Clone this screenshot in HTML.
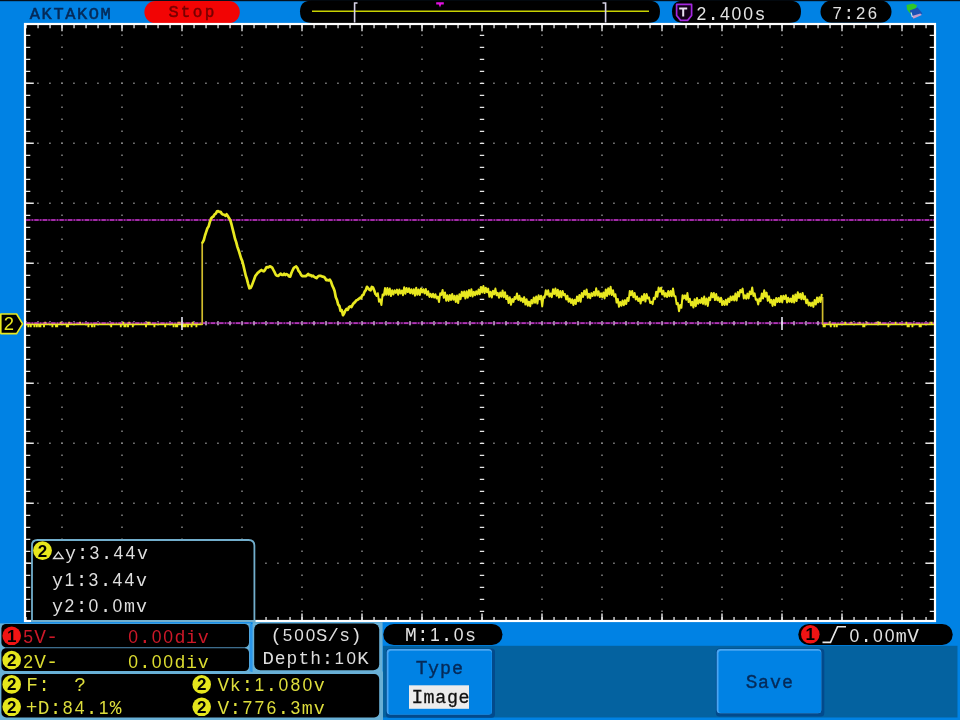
<!DOCTYPE html>
<html lang="en"><head><meta charset="utf-8"><title>AKTAKOM oscilloscope</title>
<style>html,body{margin:0;padding:0;background:#0082e4;overflow:hidden}svg{display:block;filter:blur(0.4px)}text{font-family:"Liberation Mono","DejaVu Sans Mono",monospace;white-space:pre}.s{font-family:"Liberation Sans","DejaVu Sans",sans-serif}</style></head><body>
<svg width="960" height="720" viewBox="0 0 960 720">
<rect x="0" y="0" width="960" height="720" fill="#0082e4"/>
<rect x="0" y="0" width="960" height="1.2" fill="#05101c"/>
<text text-anchor="middle" x="34.9 46.7 58.5 70.3 82.1 93.9 105.7" y="18.7" font-size="17.0" fill="#052a58" stroke="#052a58" stroke-width="0.55" xml:space="preserve">AKTAKOM</text>
<rect x="144.4" y="1" width="95.4" height="22.2" rx="11" fill="#f20404"/>
<text text-anchor="middle" x="173.5 185.5 197.5 209.5" y="17.3" font-size="17.0" fill="#760000" stroke="#760000" stroke-width="0.45" xml:space="preserve">S<tspan font-size="16.0">top</tspan></text>
<path d="M300,11.5 Q300,0.5 312,0.5 L648,0.5 Q660,0.5 660,11.5 Q660,23 648,23 L312,23 Q300,23 300,11.5Z" fill="#000"/>
<line x1="312" y1="11.3" x2="649" y2="11.3" stroke="#c8d200" stroke-width="1.5"/>
<path d="M357.5,3 H354.6 V22.6" fill="none" stroke="#d8d4e8" stroke-width="1.6"/>
<path d="M602.5,3 H605.6 V22.6" fill="none" stroke="#d8d4e8" stroke-width="1.6"/>
<path d="M436.2,2.2 H443.8 V4.4 H441.2 L440,7.6 L438.8,4.4 H436.2Z" fill="#e010e0"/>
<path d="M672,11.5 Q672,0.5 684,0.5 L789,0.5 Q801,0.5 801,11.5 Q801,23 789,23 L684,23 Q672,23 672,11.5Z" fill="#000"/>
<path d="M676.6,4.4 H691.6 V15.5 L687.6,20.4 H680.6 L676.6,15.5Z" fill="#120018" stroke="#a428e0" stroke-width="1.7" stroke-linejoin="round"/>
<path d="M679.2,8.4 H687.2 M683.2,8.4 V16.6" fill="none" stroke="#e8e0f0" stroke-width="2"/>
<text text-anchor="middle" x="701.4 713.0 724.8 736.5 748.1 759.9" y="19.6" font-size="19.5" fill="#e4e4e4" xml:space="preserve"><tspan class="s" font-size="17.6">2</tspan>.<tspan class="s" font-size="17.6">400</tspan><tspan font-size="18.3">s</tspan></text>
<rect x="820.5" y="0.5" width="71" height="22.3" rx="11.1" fill="#000"/>
<text text-anchor="middle" x="837.2 848.9 860.7 872.5" y="18.6" font-size="18.6" fill="#e0e0e0" xml:space="preserve"><tspan class="s" font-size="16.7">7</tspan>:<tspan class="s" font-size="16.7">26</tspan></text>
<path d="M906.5,5 L913,3.6 L917,5.2 L915.6,9 L912,10.5 L910.5,14 L907,9.5Z" fill="#30c828"/>
<path d="M909.6,10.6 L917.6,7.6 L922.4,13.6 L913.2,19Z" fill="#1a50b4"/>
<path d="M912,16 L920.4,13.6 L921.8,15 L913.4,18.8Z" fill="#c89cc8"/>
<path d="M911,12.5 L912.4,17.2" stroke="#c8e8f0" stroke-width="1.1"/>
<rect x="25" y="24" width="910" height="597" fill="#000"/>
<line x1="25.2" y1="83.3" x2="934" y2="83.3" stroke="#868686" stroke-width="1.5" stroke-dasharray="1.5 10.5"/>
<line x1="25.2" y1="143.3" x2="934" y2="143.3" stroke="#868686" stroke-width="1.5" stroke-dasharray="1.5 10.5"/>
<line x1="25.2" y1="203.3" x2="934" y2="203.3" stroke="#868686" stroke-width="1.5" stroke-dasharray="1.5 10.5"/>
<line x1="25.2" y1="263.3" x2="934" y2="263.3" stroke="#868686" stroke-width="1.5" stroke-dasharray="1.5 10.5"/>
<line x1="25.2" y1="383.3" x2="934" y2="383.3" stroke="#868686" stroke-width="1.5" stroke-dasharray="1.5 10.5"/>
<line x1="25.2" y1="443.3" x2="934" y2="443.3" stroke="#868686" stroke-width="1.5" stroke-dasharray="1.5 10.5"/>
<line x1="25.2" y1="503.3" x2="934" y2="503.3" stroke="#868686" stroke-width="1.5" stroke-dasharray="1.5 10.5"/>
<line x1="25.2" y1="563.3" x2="934" y2="563.3" stroke="#868686" stroke-width="1.5" stroke-dasharray="1.5 10.5"/>
<line x1="62.0" y1="34.6" x2="62.0" y2="620" stroke="#868686" stroke-width="1.5" stroke-dasharray="1.5 10.5"/>
<line x1="122.0" y1="34.6" x2="122.0" y2="620" stroke="#868686" stroke-width="1.5" stroke-dasharray="1.5 10.5"/>
<line x1="182.0" y1="34.6" x2="182.0" y2="620" stroke="#868686" stroke-width="1.5" stroke-dasharray="1.5 10.5"/>
<line x1="242.0" y1="34.6" x2="242.0" y2="620" stroke="#868686" stroke-width="1.5" stroke-dasharray="1.5 10.5"/>
<line x1="302.0" y1="34.6" x2="302.0" y2="620" stroke="#868686" stroke-width="1.5" stroke-dasharray="1.5 10.5"/>
<line x1="362.0" y1="34.6" x2="362.0" y2="620" stroke="#868686" stroke-width="1.5" stroke-dasharray="1.5 10.5"/>
<line x1="422.0" y1="34.6" x2="422.0" y2="620" stroke="#868686" stroke-width="1.5" stroke-dasharray="1.5 10.5"/>
<line x1="542.0" y1="34.6" x2="542.0" y2="620" stroke="#868686" stroke-width="1.5" stroke-dasharray="1.5 10.5"/>
<line x1="602.0" y1="34.6" x2="602.0" y2="620" stroke="#868686" stroke-width="1.5" stroke-dasharray="1.5 10.5"/>
<line x1="662.0" y1="34.6" x2="662.0" y2="620" stroke="#868686" stroke-width="1.5" stroke-dasharray="1.5 10.5"/>
<line x1="722.0" y1="34.6" x2="722.0" y2="620" stroke="#868686" stroke-width="1.5" stroke-dasharray="1.5 10.5"/>
<line x1="782.0" y1="34.6" x2="782.0" y2="620" stroke="#868686" stroke-width="1.5" stroke-dasharray="1.5 10.5"/>
<line x1="842.0" y1="34.6" x2="842.0" y2="620" stroke="#868686" stroke-width="1.5" stroke-dasharray="1.5 10.5"/>
<line x1="902.0" y1="34.6" x2="902.0" y2="620" stroke="#868686" stroke-width="1.5" stroke-dasharray="1.5 10.5"/>
<line x1="482" y1="34.8" x2="482" y2="620" stroke="#e6e6e6" stroke-width="4.4" stroke-dasharray="1.2 10.8"/>
<line x1="25.4" y1="323.3" x2="934" y2="323.3" stroke="#b0b0b0" stroke-width="4.4" stroke-dasharray="1.2 10.8"/>
<line x1="25.4" y1="26.5" x2="934" y2="26.5" stroke="#e6e6e6" stroke-width="3.4" stroke-dasharray="1.3 10.7"/>
<line x1="61.3" y1="28" x2="934" y2="28" stroke="#e6e6e6" stroke-width="6.4" stroke-dasharray="1.4 58.6"/>
<line x1="25.4" y1="618.6" x2="934" y2="618.6" stroke="#e6e6e6" stroke-width="3.4" stroke-dasharray="1.3 10.7"/>
<line x1="61.3" y1="617" x2="934" y2="617" stroke="#e6e6e6" stroke-width="6.8" stroke-dasharray="1.4 58.6"/>
<line x1="28" y1="34.7" x2="28" y2="620" stroke="#e6e6e6" stroke-width="4.6" stroke-dasharray="1.3 10.7"/>
<line x1="29.8" y1="82.6" x2="29.8" y2="620" stroke="#e6e6e6" stroke-width="8" stroke-dasharray="1.4 58.6"/>
<line x1="932" y1="34.7" x2="932" y2="620" stroke="#e6e6e6" stroke-width="4.6" stroke-dasharray="1.3 10.7"/>
<line x1="930" y1="82.6" x2="930" y2="620" stroke="#e6e6e6" stroke-width="8.6" stroke-dasharray="1.4 58.6"/>
<rect x="25" y="24" width="910" height="597" fill="none" stroke="#fff" stroke-width="2.2"/>
<line x1="26" y1="220" x2="934" y2="220" stroke="#4a0c50" stroke-width="2.2"/>
<line x1="26" y1="220" x2="934" y2="220" stroke="#a02ca4" stroke-width="1.9" stroke-dasharray="4.2 1.5 1.2 1.5"/>
<line x1="26" y1="323.2" x2="934" y2="323.2" stroke="#4a0c50" stroke-width="2.2"/>
<path d="M26.0,324.4 L28.4,324.4 L28.4,327.2 L28.4,324.4 L30.8,324.4 L30.8,327.2 L30.8,324.4 L34.4,324.4 L34.4,327.2 L34.4,324.4 L36.8,324.4 L36.8,327.2 L36.8,324.4 L39.2,324.4 L39.2,327.2 L39.2,324.4 L40.4,324.4 L40.4,327.2 L40.4,324.4 L44.0,324.4 L44.0,327.2 L44.0,324.4 L45.2,324.4 L45.2,321.8 L45.2,324.4 L52.4,324.4 L52.4,327.2 L52.4,324.4 L56.0,324.4 L56.0,327.2 L56.0,324.4 L57.2,324.4 L57.2,327.2 L57.2,324.4 L60.8,324.4 L60.8,321.8 L60.8,324.4 L66.8,324.4 L66.8,327.2 L66.8,324.4 L68.0,324.4 L68.0,327.2 L68.0,324.4 L69.2,324.4 L69.2,321.8 L69.2,324.4 L80.0,324.4 L80.0,321.8 L80.0,324.4 L88.4,324.4 L88.4,327.2 L88.4,324.4 L92.0,324.4 L92.0,327.2 L92.0,324.4 L94.4,324.4 L94.4,327.2 L94.4,324.4 L111.2,324.4 L111.2,327.2 L111.2,324.4 L120.8,324.4 L120.8,327.2 L120.8,324.4 L123.2,324.4 L123.2,321.8 L123.2,324.4 L124.4,324.4 L124.4,327.2 L124.4,324.4 L125.6,324.4 L125.6,327.2 L125.6,324.4 L128.0,324.4 L128.0,327.2 L128.0,324.4 L129.2,324.4 L129.2,321.8 L129.2,324.4 L132.8,324.4 L132.8,327.2 L132.8,324.4 L146.0,324.4 L146.0,327.2 L146.0,324.4 L147.2,324.4 L147.2,321.8 L147.2,324.4 L148.4,324.4 L148.4,321.8 L148.4,324.4 L149.6,324.4 L149.6,321.8 L149.6,324.4 L154.4,324.4 L154.4,327.2 L154.4,324.4 L165.2,324.4 L165.2,327.2 L165.2,324.4 L173.6,324.4 L173.6,327.2 L173.6,324.4 L176.0,324.4 L176.0,327.2 L176.0,324.4 L177.2,324.4 L177.2,327.2 L177.2,324.4 L178.4,324.4 L178.4,321.8 L178.4,324.4 L179.6,324.4 L179.6,321.8 L179.6,324.4 L182.0,324.4 L182.0,327.2 L182.0,324.4 L183.2,324.4 L183.2,327.2 L183.2,324.4 L184.4,324.4 L184.4,327.2 L184.4,324.4 L185.6,324.4 L185.6,327.2 L185.6,324.4 L188.0,324.4 L188.0,327.2 L188.0,324.4 L191.6,324.4 L191.6,327.2 L191.6,324.4 L192.8,324.4 L192.8,321.8 L192.8,324.4 L196.4,324.4 L196.4,327.2 L196.4,324.4 L202.4,324.4" fill="none" stroke="#e8e820" stroke-width="1.9" stroke-linejoin="bevel"/>
<path d="M822.4,324.4 L823.6,324.4 L823.6,327.2 L823.6,324.4 L824.8,324.4 L824.8,327.2 L824.8,324.4 L829.6,324.4 L829.6,321.8 L829.6,324.4 L830.8,324.4 L830.8,327.2 L830.8,324.4 L834.4,324.4 L834.4,327.2 L834.4,324.4 L836.8,324.4 L836.8,327.2 L836.8,324.4 L845.2,324.4 L845.2,321.8 L845.2,324.4 L851.2,324.4 L851.2,321.8 L851.2,324.4 L859.6,324.4 L859.6,321.8 L859.6,324.4 L863.2,324.4 L863.2,327.2 L863.2,324.4 L864.4,324.4 L864.4,327.2 L864.4,324.4 L866.8,324.4 L866.8,321.8 L866.8,324.4 L876.4,324.4 L876.4,321.8 L876.4,324.4 L877.6,324.4 L877.6,321.8 L877.6,324.4 L878.8,324.4 L878.8,321.8 L878.8,324.4 L880.0,324.4 L880.0,321.8 L880.0,324.4 L888.4,324.4 L888.4,327.2 L888.4,324.4 L895.6,324.4 L895.6,321.8 L895.6,324.4 L906.4,324.4 L906.4,321.8 L906.4,324.4 L907.6,324.4 L907.6,327.2 L907.6,324.4 L908.8,324.4 L908.8,327.2 L908.8,324.4 L912.4,324.4 L912.4,327.2 L912.4,324.4 L919.6,324.4 L919.6,327.2 L919.6,324.4 L920.8,324.4 L920.8,327.2 L920.8,324.4 L930.4,324.4 L930.4,321.8 L930.4,324.4 L931.6,324.4 L931.6,321.8 L931.6,324.4 L934.0,324.4" fill="none" stroke="#e8e820" stroke-width="1.9" stroke-linejoin="bevel"/>
<line x1="202.2" y1="325" x2="202.2" y2="242" stroke="#d0bc2c" stroke-width="1.7"/>
<line x1="822.6" y1="325" x2="822.6" y2="297" stroke="#d0bc2c" stroke-width="1.7"/>
<path d="M202.6,242.5 L203.8,240.1 L205.0,235.5 L206.2,231.8 L207.4,228.2 L208.6,226.5 L209.8,222.1 L211.0,218.7 L212.2,217.2 L213.4,216.5 L214.6,214.4 L215.8,213.7 L217.0,211.3 L218.2,211.1 L219.4,211.9 L220.6,211.8 L221.8,213.8 L223.0,214.5 L224.2,214.8 L225.4,215.8 L226.6,214.3 L227.8,216.0 L229.0,218.1 L230.2,219.9 L231.4,224.0 L232.6,228.9 L233.8,233.6 L235.0,238.7 L236.2,242.1 L237.4,246.9 L238.6,250.2 L239.8,254.0 L241.0,258.1 L242.2,260.9 L243.4,265.4 L244.6,270.6 L245.8,275.7 L247.0,279.3 L248.2,284.1 L249.4,288.3 L250.6,288.0 L251.8,285.6 L253.0,282.4 L254.2,279.2 L255.4,275.8 L256.6,274.4 L257.8,272.8 L259.0,271.9 L260.2,270.8 L261.4,270.0 L262.6,270.9 L263.8,271.3 L265.0,270.0 L266.2,267.6 L267.4,267.1 L268.6,267.3 L269.8,266.3 L271.0,266.8 L272.2,267.7 L273.4,270.0 L274.6,272.2 L275.8,274.8 L277.0,275.6 L278.2,275.8 L279.4,274.9 L280.6,273.6 L281.8,274.9 L283.0,275.0 L284.2,273.7 L285.4,275.0 L286.6,274.2 L287.8,274.9 L289.0,276.4 L290.2,276.7 L291.4,273.0 L292.6,270.3 L293.8,267.9 L295.0,267.2 L296.2,266.5 L297.4,268.0 L298.6,271.1 L299.8,272.2 L301.0,274.8 L302.2,276.1 L303.4,276.2 L304.6,276.2 L305.8,276.1 L307.0,275.2 L308.2,274.0 L309.4,275.3 L310.6,275.0 L311.8,276.3 L313.0,275.7 L314.2,276.9 L315.4,277.5 L316.6,278.2 L317.8,276.7 L319.0,275.9 L320.2,275.8 L321.4,276.1 L322.6,276.7 L323.8,276.9 L325.0,277.9 L326.2,280.2 L327.4,279.9 L328.6,280.4 L329.8,279.6 L331.0,281.7 L332.2,285.4 L333.4,287.8 L334.6,291.0 L335.8,297.2 L337.0,300.0 L338.2,304.6 L339.4,306.0 L340.6,310.9 L341.8,310.2 L343.0,315.2 L344.2,313.3 L345.4,310.5 L346.6,308.9 L347.8,309.8 L349.0,307.1 L350.2,306.3 L351.4,307.0 L352.6,304.8 L353.8,303.1 L355.0,302.1 L356.2,300.5 L357.4,299.9 L358.6,299.1 L359.8,297.9 L361.0,298.3 L362.2,295.4 L363.4,294.8 L364.6,291.6 L365.8,290.1 L367.0,286.8 L368.2,288.2 L369.4,289.8 L370.6,290.3 L371.8,287.0 L373.0,287.5 L374.2,290.4 L375.4,293.9" fill="none" stroke="#e8e820" stroke-width="2.7" stroke-linejoin="round" stroke-linecap="round"/>
<path d="M375.4,293.9 L376.6,296.0 L377.8,293.2 L379.0,301.7 L380.2,299.4 L381.4,305.1 L382.6,294.6 L383.8,295.5 L385.0,288.1 L386.2,294.7 L387.4,288.0 L388.6,294.8 L389.8,288.6 L391.0,296.0 L392.2,290.2 L393.4,294.5 L394.6,290.3 L395.8,292.9 L397.0,289.6 L398.2,294.8 L399.4,289.5 L400.6,293.5 L401.8,290.5 L403.0,295.2 L404.2,287.2 L405.4,293.8 L406.6,288.0 L407.8,292.1 L409.0,288.3 L410.2,293.3 L411.4,289.2 L412.6,293.7 L413.8,289.3 L415.0,295.7 L416.2,287.7 L417.4,294.8 L418.6,289.5 L419.8,295.1 L421.0,288.4 L422.2,292.4 L423.4,289.2 L424.6,293.4 L425.8,288.9 L427.0,295.0 L428.2,291.3 L429.4,296.9 L430.6,293.8 L431.8,297.2 L433.0,293.7 L434.2,297.6 L435.4,294.3 L436.6,298.5 L437.8,296.5 L439.0,302.1 L440.2,293.3 L441.4,295.0 L442.6,289.9 L443.8,297.8 L445.0,292.5 L446.2,300.7 L447.4,295.3 L448.6,300.9 L449.8,295.1 L451.0,300.0 L452.2,294.0 L453.4,299.7 L454.6,295.7 L455.8,302.0 L457.0,295.6 L458.2,303.0 L459.4,294.3 L460.6,299.2 L461.8,291.7 L463.0,296.3 L464.2,291.4 L465.4,298.5 L466.6,291.3 L467.8,297.7 L469.0,290.1 L470.2,296.0 L471.4,289.3 L472.6,296.5 L473.8,291.8 L475.0,295.2 L476.2,291.3 L477.4,294.4 L478.6,289.5 L479.8,294.2 L481.0,287.0 L482.2,292.5 L483.4,286.1 L484.6,293.1 L485.8,287.7 L487.0,292.3 L488.2,288.6 L489.4,296.8 L490.6,291.8 L491.8,297.6 L493.0,290.7 L494.2,294.4 L495.4,288.6 L496.6,295.2 L497.8,292.9 L499.0,297.7 L500.2,292.4 L501.4,296.7 L502.6,290.5 L503.8,297.2 L505.0,292.2 L506.2,299.1 L507.4,295.8 L508.6,303.1 L509.8,297.3 L511.0,304.8 L512.2,299.1 L513.4,301.9 L514.6,297.0 L515.8,298.9 L517.0,293.4 L518.2,299.9 L519.4,295.7 L520.6,300.7 L521.8,298.3 L523.0,302.1 L524.2,297.1 L525.4,304.5 L526.6,299.2 L527.8,305.8 L529.0,301.6 L530.2,306.2 L531.4,300.0 L532.6,303.4 L533.8,297.4 L535.0,302.8 L536.2,296.5 L537.4,303.5 L538.6,295.3 L539.8,299.2 L541.0,295.8 L542.2,306.4 L543.4,296.6 L544.6,297.7 L545.8,290.2 L547.0,294.7 L548.2,290.3 L549.4,296.6 L550.6,293.5 L551.8,297.1 L553.0,289.3 L554.2,294.1 L555.4,288.6 L556.6,295.7 L557.8,289.7 L559.0,297.5 L560.2,291.1 L561.4,297.2 L562.6,291.0 L563.8,295.3 L565.0,294.0 L566.2,299.5 L567.4,295.7 L568.6,301.7 L569.8,298.5 L571.0,303.0 L572.2,299.2 L573.4,305.0 L574.6,299.7 L575.8,304.1 L577.0,296.5 L578.2,301.2 L579.4,295.0 L580.6,301.8 L581.8,292.9 L583.0,297.1 L584.2,290.8 L585.4,294.8 L586.6,289.4 L587.8,297.8 L589.0,293.7 L590.2,298.3 L591.4,293.1 L592.6,296.0 L593.8,292.0 L595.0,295.7 L596.2,288.3 L597.4,295.4 L598.6,291.2 L599.8,297.1 L601.0,293.3 L602.2,297.3 L603.4,292.5 L604.6,298.4 L605.8,289.5 L607.0,296.1 L608.2,288.3 L609.4,294.4 L610.6,286.7 L611.8,295.1 L613.0,290.3 L614.2,296.6 L615.4,294.2 L616.6,302.6 L617.8,299.0 L619.0,306.8 L620.2,301.9 L621.4,305.7 L622.6,300.5 L623.8,305.3 L625.0,300.1 L626.2,304.1 L627.4,297.9 L628.6,301.0 L629.8,290.9 L631.0,295.2 L632.2,290.9 L633.4,297.2 L634.6,293.0 L635.8,299.5 L637.0,296.5 L638.2,301.1 L639.4,298.4 L640.6,303.6 L641.8,296.3 L643.0,300.4 L644.2,293.9 L645.4,301.5 L646.6,294.1 L647.8,298.5 L649.0,297.4 L650.2,303.1 L651.4,301.7 L652.6,304.1 L653.8,297.8 L655.0,299.1 L656.2,291.7 L657.4,296.7 L658.6,287.6 L659.8,291.8 L661.0,287.8 L662.2,294.5 L663.4,290.8 L664.6,296.6 L665.8,293.1 L667.0,297.0 L668.2,291.1 L669.4,296.2 L670.6,291.0 L671.8,296.2 L673.0,288.5 L674.2,296.2 L675.4,296.2 L676.6,304.2 L677.8,303.0 L679.0,311.2 L680.2,305.0 L681.4,307.8 L682.6,295.2 L683.8,298.4 L685.0,295.4 L686.2,299.8 L687.4,293.1 L688.6,302.0 L689.8,298.8 L691.0,305.4 L692.2,301.7 L693.4,307.5 L694.6,299.2 L695.8,306.2 L697.0,298.0 L698.2,303.8 L699.4,300.0 L700.6,302.9 L701.8,298.1 L703.0,303.9 L704.2,296.6 L705.4,304.6 L706.6,298.6 L707.8,305.9 L709.0,297.5 L710.2,300.2 L711.4,293.0 L712.6,297.2 L713.8,292.9 L715.0,300.0 L716.2,294.1 L717.4,300.3 L718.6,297.4 L719.8,302.0 L721.0,297.7 L722.2,305.0 L723.4,301.0 L724.6,305.0 L725.8,299.8 L727.0,304.7 L728.2,298.4 L729.4,302.0 L730.6,296.5 L731.8,300.2 L733.0,296.2 L734.2,300.6 L735.4,293.6 L736.6,300.6 L737.8,292.1 L739.0,296.5 L740.2,289.9 L741.4,292.3 L742.6,288.6 L743.8,298.4 L745.0,295.3 L746.2,298.8 L747.4,293.6 L748.6,298.4 L749.8,291.4 L751.0,294.3 L752.2,287.5 L753.4,295.9 L754.6,293.3 L755.8,299.8 L757.0,299.3 L758.2,304.6 L759.4,298.4 L760.6,301.2 L761.8,293.6 L763.0,298.5 L764.2,290.3 L765.4,296.7 L766.6,292.6 L767.8,300.8 L769.0,296.2 L770.2,302.7 L771.4,299.8 L772.6,305.9 L773.8,299.7 L775.0,305.3 L776.2,297.9 L777.4,302.0 L778.6,298.0 L779.8,302.1 L781.0,296.0 L782.2,302.4 L783.4,295.8 L784.6,299.0 L785.8,295.2 L787.0,302.4 L788.2,297.7 L789.4,301.8 L790.6,298.6 L791.8,302.2 L793.0,295.6 L794.2,302.6 L795.4,294.4 L796.6,301.1 L797.8,292.2 L799.0,298.1 L800.2,293.8 L801.4,299.3 L802.6,292.9 L803.8,299.2 L805.0,296.2 L806.2,303.2 L807.4,299.6 L808.6,305.4 L809.8,302.6 L811.0,305.9 L812.2,302.5 L813.4,306.9 L814.6,300.1 L815.8,304.6 L817.0,297.6 L818.2,302.4 L819.4,297.2 L820.6,302.1 L821.8,293.8" fill="none" stroke="#e8e820" stroke-width="2" stroke-linejoin="round"/>
<line x1="202.8" y1="323.2" x2="822" y2="323.2" stroke="#b038b4" stroke-width="1.8" stroke-dasharray="4.2 1.5 1.2 1.5" stroke-dashoffset="0.4"/>
<line x1="26" y1="323.1" x2="201.6" y2="323.1" stroke="#e45cc4" stroke-width="1.3" stroke-dasharray="4.2 1.5 1.2 1.5"/>
<line x1="823.4" y1="323.1" x2="934" y2="323.1" stroke="#e45cc4" stroke-width="1.3" stroke-dasharray="4.2 1.5 1.2 1.5"/>
<line x1="205.4" y1="323.3" x2="820" y2="323.3" stroke="#c8b4d0" stroke-width="3.6" stroke-dasharray="1.2 10.8"/>
<line x1="182" y1="317" x2="182" y2="330" stroke="#e8e8f4" stroke-width="1.6"/>
<line x1="782" y1="317" x2="782" y2="330" stroke="#e8e8f4" stroke-width="1.6"/>
<path d="M0.8,314 H16.6 L22.6,323.8 L16.6,333.6 H0.8Z" fill="#000" stroke="#e8e820" stroke-width="1.6" stroke-linejoin="round"/>
<text x="3.8" y="330.4" font-size="18.4" fill="#e8e820" class="s">2</text>
<path d="M32,621 V545.5 Q32,540 37.5,540 H248.6 Q254.4,540 254.4,545.8 V621Z" fill="#000"/>
<path d="M32,622 V545.5 Q32,540 37.5,540 H248.6 Q254.4,540 254.4,545.8 V622" fill="none" stroke="#72aecc" stroke-width="1.8"/>
<line x1="31" y1="621" x2="255.4" y2="621" stroke="#72aecc" stroke-width="2"/>
<circle cx="42.5" cy="550.6" r="9.4" fill="#e6e61c"/>
<text x="37.8" y="556.6" font-size="17.0" fill="#000" class="s" font-weight="bold">2</text>
<path d="M53.6,558.5 L58.4,552 L63.2,558.5Z" fill="none" stroke="#dcdcdc" stroke-width="1.3"/>
<text text-anchor="middle" x="70.5 82.5 94.5 106.5 118.5 130.5 142.5" y="559.4" font-size="19.5" fill="#dedede" xml:space="preserve"><tspan font-size="18.3">y</tspan>:<tspan class="s" font-size="17.6">3</tspan>.<tspan class="s" font-size="17.6">44</tspan><tspan font-size="18.3">v</tspan></text>
<text text-anchor="middle" x="57.5 69.5 81.5 93.5 105.5 117.5 129.5 141.5" y="585.6" font-size="19.5" fill="#dedede" xml:space="preserve"><tspan font-size="18.3">y</tspan><tspan class="s" font-size="17.6">1</tspan>:<tspan class="s" font-size="17.6">3</tspan>.<tspan class="s" font-size="17.6">44</tspan><tspan font-size="18.3">v</tspan></text>
<text text-anchor="middle" x="57.5 69.5 81.5 93.5 105.5 117.5 129.5 141.5" y="611.9" font-size="19.5" fill="#dedede" xml:space="preserve"><tspan font-size="18.3">y</tspan><tspan class="s" font-size="17.6">2</tspan>:<tspan class="s" font-size="17.6">0</tspan>.<tspan class="s" font-size="17.6">0</tspan><tspan font-size="18.3">mv</tspan></text>
<rect x="383" y="645.8" width="574.5" height="71.7" fill="#0462a0"/>
<rect x="0" y="623.4" width="251" height="50" fill="#68b0d6"/>
<rect x="0" y="671.5" width="383" height="48.5" fill="#68b0d6"/>
<rect x="249.6" y="624" width="4" height="47.5" fill="#2a96ea"/>
<rect x="252.6" y="622.2" width="130" height="50" fill="#68b0d6"/>
<rect x="1.4" y="624" width="247.6" height="23.3" rx="4.5" fill="#000"/>
<rect x="5" y="647" width="240" height="1.6" fill="#3c6c8c"/>
<rect x="1.4" y="648.3" width="247.6" height="22.7" rx="4.5" fill="#000"/>
<circle cx="11.7" cy="635.8" r="9.3" fill="#f01414"/>
<text x="7.0" y="641.8" font-size="17.0" fill="#000" class="s" font-weight="bold">1</text>
<text text-anchor="middle" x="28.2 40.2 52.2" y="643.4" font-size="19.5" fill="#cc1828" xml:space="preserve"><tspan class="s" font-size="17.6">5</tspan>V-</text>
<text text-anchor="middle" x="133.2 144.8 156.6 168.2 179.9 191.6 203.3" y="643.4" font-size="19.5" fill="#cc1828" xml:space="preserve"><tspan class="s" font-size="17.6">0</tspan>.<tspan class="s" font-size="17.6">00</tspan><tspan font-size="18.3">div</tspan></text>
<circle cx="11.7" cy="660.0" r="9.3" fill="#e6e61c"/>
<text x="7.0" y="666.0" font-size="17.0" fill="#000" class="s" font-weight="bold">2</text>
<text text-anchor="middle" x="28.2 40.2 52.2" y="667.6" font-size="19.5" fill="#dcdc30" xml:space="preserve"><tspan class="s" font-size="17.6">2</tspan>V-</text>
<text text-anchor="middle" x="133.2 144.8 156.6 168.2 179.9 191.6 203.3" y="667.6" font-size="19.5" fill="#dcdc30" xml:space="preserve"><tspan class="s" font-size="17.6">0</tspan>.<tspan class="s" font-size="17.6">00</tspan><tspan font-size="18.3">div</tspan></text>
<rect x="254.2" y="623.4" width="125" height="46.8" rx="6" fill="#000"/>
<text text-anchor="middle" x="276.2 287.6 299.0 310.4 321.8 333.2 344.6 356.0" y="640.8" font-size="19.0" fill="#dedede" xml:space="preserve">(<tspan class="s" font-size="17.1">500</tspan>S/<tspan font-size="17.9">s</tspan>)</text>
<text text-anchor="middle" x="268.2 280.1 291.9 303.8 315.6 327.5 339.3 351.2 363.0" y="664.4" font-size="19.0" fill="#dedede" xml:space="preserve">D<tspan font-size="17.9">epth</tspan>:<tspan class="s" font-size="17.1">10</tspan>K</text>
<rect x="1.4" y="674" width="377.8" height="43.4" rx="5" fill="#000"/>
<circle cx="11.7" cy="684.4" r="9.3" fill="#e6e61c"/>
<text x="7.0" y="690.4" font-size="17.0" fill="#000" class="s" font-weight="bold">2</text>
<text text-anchor="middle" x="32.0 44.0 56.0 68.0 80.0" y="691.4" font-size="19.5" fill="#dede3c" xml:space="preserve">F:  ?</text>
<circle cx="11.7" cy="706.8" r="9.3" fill="#e6e61c"/>
<text x="7.0" y="712.8" font-size="17.0" fill="#000" class="s" font-weight="bold">2</text>
<text text-anchor="middle" x="31.6 43.6 55.6 67.6 79.6 91.6 103.6 115.6" y="714.0" font-size="19.5" fill="#dede3c" xml:space="preserve">+D:<tspan class="s" font-size="17.6">84</tspan>.<tspan class="s" font-size="17.6">1</tspan>%</text>
<circle cx="201.7" cy="684.4" r="9.3" fill="#e6e61c"/>
<text x="197.0" y="690.4" font-size="17.0" fill="#000" class="s" font-weight="bold">2</text>
<text text-anchor="middle" x="223.3 235.3 247.3 259.3 271.3 283.3 295.3 307.3 319.3" y="691.4" font-size="19.5" fill="#dede3c" xml:space="preserve">V<tspan font-size="18.3">k</tspan>:<tspan class="s" font-size="17.6">1</tspan>.<tspan class="s" font-size="17.6">080</tspan><tspan font-size="18.3">v</tspan></text>
<circle cx="201.7" cy="706.8" r="9.3" fill="#e6e61c"/>
<text x="197.0" y="712.8" font-size="17.0" fill="#000" class="s" font-weight="bold">2</text>
<text text-anchor="middle" x="223.3 235.3 247.3 259.3 271.3 283.3 295.3 307.3 319.3" y="714.0" font-size="19.5" fill="#dede3c" xml:space="preserve">V:<tspan class="s" font-size="17.6">776</tspan>.<tspan class="s" font-size="17.6">3</tspan><tspan font-size="18.3">mv</tspan></text>
<rect x="383.3" y="624" width="119.2" height="21" rx="10.5" fill="#000"/>
<text text-anchor="middle" x="410.9 422.9 434.8 446.6 458.6 470.4" y="640.8" font-size="19.5" fill="#e2e2e2" xml:space="preserve">M:<tspan class="s" font-size="17.6">1</tspan>.<tspan class="s" font-size="17.6">0</tspan><tspan font-size="18.3">s</tspan></text>
<rect x="798.3" y="624" width="154.4" height="21" rx="10.5" fill="#000"/>
<circle cx="810.3" cy="634.3" r="9.3" fill="#f01414"/>
<text x="805.6" y="640.3" font-size="17.0" fill="#000" class="s" font-weight="bold">1</text>
<path d="M822.5,642.4 H830.5 L837.5,626.8 H846" fill="none" stroke="#e8e8e8" stroke-width="1.6"/>
<text text-anchor="middle" x="854.5 866.1 877.9 889.6 901.2 913.0" y="641.8" font-size="19.5" fill="#e2e2e2" xml:space="preserve"><tspan class="s" font-size="17.6">0</tspan>.<tspan class="s" font-size="17.6">00</tspan><tspan font-size="18.3">m</tspan>V</text>
<rect x="385.9" y="648.4" width="109.1" height="69.4" rx="3.5" fill="#024a8c"/>
<rect x="386.7" y="649.0" width="105.3" height="65.6" rx="3.5" fill="#4aa6f2"/>
<rect x="388.5" y="650.8" width="103.3" height="63.6" rx="2.5" fill="#0082e4"/>
<text text-anchor="middle" x="421.5 433.5 445.5 457.5" y="674.0" font-size="19.5" fill="#052a58" stroke="#052a58" stroke-width="0.4" xml:space="preserve">T<tspan font-size="18.3">ype</tspan></text>
<rect x="409" y="685.3" width="60" height="23.5" fill="#ececec"/>
<text text-anchor="middle" x="417.4 429.1 440.8 452.4 464.1" y="702.6" font-size="19.5" fill="#101010" stroke="#101010" stroke-width="0.3" xml:space="preserve">I<tspan font-size="18.3">mage</tspan></text>
<rect x="715.9" y="648.4" width="108.4" height="68.0" rx="3.5" fill="#024a8c"/>
<rect x="716.7" y="649.0" width="104.6" height="64.2" rx="3.5" fill="#4aa6f2"/>
<rect x="718.5" y="650.8" width="102.6" height="62.2" rx="2.5" fill="#0082e4"/>
<text text-anchor="middle" x="751.6 763.6 775.6 787.6" y="688.4" font-size="19.5" fill="#052a58" stroke="#052a58" stroke-width="0.35" xml:space="preserve">S<tspan font-size="18.3">ave</tspan></text>
</svg></body></html>
